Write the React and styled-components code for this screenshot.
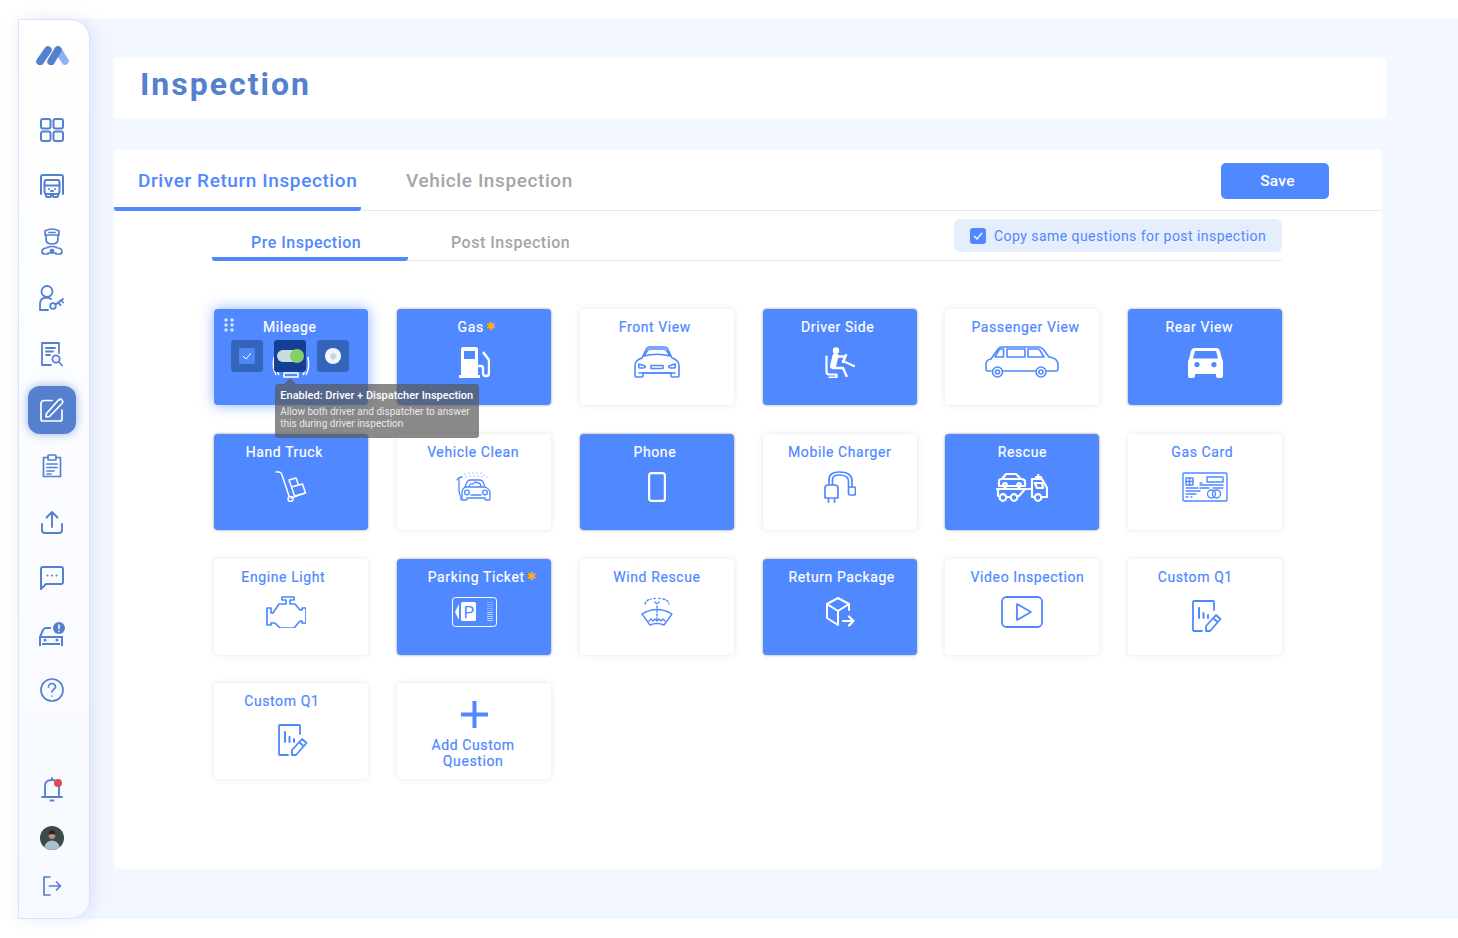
import React from "react";
import styled, { createGlobalStyle } from "styled-components";

const PRIMARY = "#4f88ff";
const NAVY = "#5580d0";

const GlobalStyle = createGlobalStyle`
  html, body {
    margin: 0;
    background: #fff;
    font-family: Roboto, "Liberation Sans", sans-serif;
  }
  * { box-sizing: border-box; }
`;

const Page = styled.div`
  padding: 19px 0 19px 18px;
  width: 1458px;
  height: 938px;
`;

const Frame = styled.div`
  display: flex;
  height: 900px;
  background: #f3f7ff;
`;

const Sidebar = styled.aside`
  flex: 0 0 72px;
  display: flex;
  flex-direction: column;
  align-items: center;
  padding: 26px 4px 8px 0;
  background: linear-gradient(180deg, #fff 0%, #f6f9ff 100%);
  border: 1px solid #d9e3f7;
  border-radius: 0 20px 20px 0;
  box-shadow: 6px 0 18px rgba(100, 130, 220, 0.12), -4px 0 14px rgba(100, 130, 220, 0.05);
`;

const Logo = styled.svg`
  display: block;
  margin: 0 0 41px 1px;
`;

const Nav = styled.nav`
  display: flex;
  flex-direction: column;
  gap: 8px;
`;

const NavItem = styled.a`
  width: 48px;
  height: 48px;
  display: flex;
  align-items: center;
  justify-content: center;
  border-radius: 12px;
  color: ${(p) => (p.$active ? "#fff" : NAVY)};
  background: ${(p) => (p.$active ? NAVY : "transparent")};
  box-shadow: ${(p) => (p.$active ? "0 0 10px rgba(85, 128, 208, 0.6)" : "none")};
`;

const BottomNav = styled.div`
  margin-top: auto;
  display: flex;
  flex-direction: column;
`;

const Main = styled.main`
  flex: 1;
  padding: 39px 0 0 24px;
`;

const HeaderCard = styled.header`
  width: 1272px;
  height: 60px;
  display: flex;
  align-items: center;
  padding: 0 0 8px 26px;
  margin-bottom: 32px;
  background: #fff;
  border-radius: 4px;
`;

const Title = styled.h1`
  margin: 0;
  font-size: 32px;
  font-weight: 700;
  letter-spacing: 2px;
  color: ${NAVY};
`;

const ContentCard = styled.section`
  width: 1268px;
  height: 719px;
  background: #fff;
  border-radius: 4px;
`;

const TopTabs = styled.div`
  display: flex;
  align-items: stretch;
  height: 61px;
  border-bottom: 1px solid #e8e8e8;
`;

const TopTab = styled.div`
  width: ${(p) => p.$width}px;
  height: 61px;
  padding: 19px 0 0 ${(p) => p.$pad}px;
  font-size: 19px;
  font-weight: 500;
  letter-spacing: 0.6px;
  line-height: 24px;
  color: ${(p) => (p.$active ? PRIMARY : "#a5a5a5")};
  border-bottom: 4px solid ${(p) => (p.$active ? PRIMARY : "transparent")};
  border-radius: 0 0 3px 3px;
`;

const SaveButton = styled.button`
  width: 108px;
  height: 36px;
  margin: 13px 53px 0 auto;
  padding: 0 0 0 5px;
  border: 0;
  border-radius: 5px;
  background: ${PRIMARY};
  color: #fff;
  font: 500 15.5px Roboto, sans-serif;
  letter-spacing: 0.3px;
`;

const SubTabs = styled.div`
  display: flex;
  height: 50px;
  margin: 0 100px 0 98px;
  border-bottom: 1px solid #eaeaea;
`;

const SubTab = styled.div`
  width: ${(p) => p.$width}px;
  height: 50px;
  padding: 22px 0 0 ${(p) => p.$pad}px;
  font-size: 16px;
  font-weight: 500;
  letter-spacing: 0.5px;
  line-height: 19px;
  color: ${(p) => (p.$active ? PRIMARY : "#a5a5a5")};
  border-bottom: ${(p) => (p.$active ? `4px solid ${PRIMARY}` : "0")};
  border-radius: 0 0 3px 3px;
`;

const CopyBox = styled.label`
  display: flex;
  align-items: center;
  gap: 8px;
  width: 328px;
  height: 33px;
  margin: 8px 0 0 auto;
  padding-left: 16px;
  border-radius: 6px;
  background: #e6edfd;
  color: ${PRIMARY};
  font-size: 14px;
  letter-spacing: 0.45px;
`;

const CopyCheck = styled.span`
  width: 16px;
  height: 16px;
  display: flex;
  align-items: center;
  justify-content: center;
  border-radius: 3px;
  background: ${PRIMARY};
`;

const Grid = styled.div`
  display: grid;
  grid-template-columns: repeat(6, 154px);
  grid-auto-rows: 96px;
  gap: 28.8px;
  margin: 48px 0 0 100.3px;
  width: 1069px;
`;

const Card = styled.div`
  position: relative;
  padding-top: 10px;
  border-radius: 4px;
  background: ${(p) => (p.$on ? PRIMARY : "#fff")};
  color: ${(p) => (p.$on ? "#fff" : PRIMARY)};
  box-shadow: ${(p) =>
    p.$glow
      ? "0 0 14px rgba(79, 136, 255, 0.65)"
      : p.$on
      ? "0 0 3px rgba(0, 0, 0, 0.4)"
      : "0 0 6px rgba(0, 0, 0, 0.1)"};
`;

const Label = styled.div`
  display: flex;
  justify-content: center;
  height: 16px;
  padding-left: ${(p) => Math.max(0, p.$shift * 2)}px;
  padding-right: ${(p) => Math.max(0, -p.$shift * 2)}px;
  font-size: 14px;
  font-weight: 400;
  letter-spacing: 0.6px;
  line-height: 16px;
  white-space: nowrap;
  -webkit-text-stroke: 0.2px currentColor;
`;

const Star = styled.span`
  margin-left: 2px;
  color: #ffb000;
  font-family: "DejaVu Sans", sans-serif;
  font-size: 11px;
`;

const IconBox = styled.div`
  display: flex;
  justify-content: center;
  align-items: center;
  height: 36px;
  margin-top: 9px;
  padding-top: ${(p) => p.$drop || 0}px;
  padding-right: ${(p) => Math.max(0, p.$left || 0)}px;
  padding-left: ${(p) => Math.max(0, -(p.$left || 0))}px;
`;

const AddBody = styled.div`
  display: flex;
  flex-direction: column;
  align-items: center;
  padding-top: 8px;
  font-size: 14px;
  font-weight: 400;
  letter-spacing: 0.6px;
  line-height: 16px;
  text-align: center;
  -webkit-text-stroke: 0.2px currentColor;
`;

const AddText = styled.div`
  margin-top: 9px;
  padding-right: 2px;
`;

const DragDots = styled.svg`
  position: absolute;
  left: 10px;
  top: 9px;
`;

const Actions = styled.div`
  position: absolute;
  left: 17px;
  top: 31px;
  display: flex;
  gap: 11px;
`;

const ActionButton = styled.span`
  width: 32px;
  height: 32px;
  display: flex;
  align-items: center;
  justify-content: center;
  border-radius: 3px;
  background: ${(p) => (p.$dark ? "#153e95" : "#3565bb")};
`;

const MiniCheck = styled.span`
  width: 16px;
  height: 16px;
  display: flex;
  align-items: center;
  justify-content: center;
  border-radius: 2px;
  background: #4d86f5;
`;

const Toggle = styled.span`
  position: relative;
  display: block;
  width: 26px;
  height: 12px;
  border-radius: 6px;
  background: #c9dcdc;
`;

const ToggleKnob = styled.span`
  position: absolute;
  right: -1px;
  top: -1px;
  width: 14px;
  height: 14px;
  border-radius: 50%;
  background: #84d16c;
`;

const Dot = styled.span`
  width: 16px;
  height: 16px;
  display: flex;
  align-items: center;
  justify-content: center;
  border-radius: 50%;
  background: #f4f6fb;
  color: #c8cfdc;
  font-family: "DejaVu Sans", sans-serif;
  font-size: 10px;
`;

const Tooltip = styled.div`
  position: absolute;
  z-index: 2;
  left: 61px;
  top: 75px;
  width: 204px;
  height: 54px;
  padding: 5px 5px 0;
  border-radius: 3px;
  background: rgba(88, 88, 88, 0.7);
  color: #fff;
  &::before {
    content: "";
    position: absolute;
    left: 9px;
    top: -6px;
    border: 6px solid transparent;
    border-top: 0;
    border-bottom-color: rgba(88, 88, 88, 0.7);
  }
`;

const TipTitle = styled.div`
  font-size: 11px;
  font-weight: 500;
  line-height: 13px;
  white-space: nowrap;
  margin-bottom: 4px;
`;

const TipBody = styled.div`
  font-size: 10px;
  line-height: 12px;
  color: #e8e8e8;
  white-space: nowrap;
`;

/* sidebar icons */
const Line = ({ w = 24, h = 24, sw = 2, children }) => (
  <svg width={w} height={h} viewBox={`0 0 ${w} ${h}`} fill="none" stroke="currentColor" strokeWidth={sw} strokeLinecap="round" strokeLinejoin="round">
    {children}
  </svg>
);

const DashIcon = () => (
  <Line>
    <rect x="1" y="1" width="9.5" height="9.5" rx="2" />
    <rect x="13.5" y="1" width="9.5" height="9.5" rx="2" />
    <rect x="1" y="13.5" width="9.5" height="9.5" rx="2" />
    <rect x="13.5" y="13.5" width="9.5" height="9.5" rx="2" />
  </Line>
);

const TruckIcon = () => (
  <Line>
    <path d="M1 20V3a2 2 0 012-2h18a2 2 0 012 2v17" />
    <rect x="4.5" y="6" width="15" height="14" rx="2" />
    <path d="M4.500 11.500h15M6 20v2a1 1 0 001 1h3a1 1 0 001-1v-2M13 20v2a1 1 0 001 1h3a1 1 0 001-1v-2M9 15h.01M15 15h.01M11 17h2" />
  </Line>
);

const DriverIcon = () => (
  <Line w={22} h={29} sw={1.700}>
    <path d="M4 3q7-4 14 0v4H4zM5 7v4q0 5 6 5t6-5V7M8 4.500h6" />
    <path d="M6 19.500q5-2 10 0M5.500 20Q1 20 1 24q0 2 3 2h3l1-1M16.500 20q4.500 0 4.500 4 0 2-3 2h-3l-1-1M7 25h8" />
    <circle cx="11" cy="23" r="1.500" fill="currentColor" />
  </Line>
);

const PersonKeyIcon = () => (
  <Line w={26} h={26} sw={1.800}>
    <circle cx="8" cy="6.500" r="5.500" />
    <path d="M1 25v-6q0-6 6-6.500 3 0 5 1.500M1 25h8" />
    <circle cx="14" cy="21" r="2.800" />
    <path d="M16.500 19.500L24 14M19 17.500l2.500 2.500M22 15l2 2.500" />
  </Line>
);

const ReportIcon = () => (
  <Line w={22} h={25} sw={1.800}>
    <path d="M18 11V1H1v22h9" />
    <path d="M5 6h9M5 9.500h7M5 13h4" />
    <circle cx="15" cy="17" r="3.600" />
    <path d="M18 20l3 3.500" />
  </Line>
);

const EditIcon = () => (
  <Line w={24} h={24} sw={1.700}>
    <path d="M12 2.500H4a3 3 0 00-3 3V21a2 2 0 002 2h17a2 2 0 002-2V12" />
    <path d="M6.500 15.500L18.500 2q2-1.500 3.500 0t0 3.500L9.500 18.500l-3.500.5z" />
  </Line>
);

const ClipboardIcon = () => (
  <Line w={20} h={24} sw={1.700}>
    <path d="M6 3.500H1.500v19h17v-19H14" />
    <rect x="6" y="1" width="8" height="5" rx="1" />
    <path d="M5 10h10M5 13.500h10M5 17h7M5 20h4" />
  </Line>
);

const UploadIcon = () => (
  <Line w={22} h={24} sw={1.900}>
    <path d="M1 14v6a3 3 0 003 3h14a3 3 0 003-3v-6M11 17V2M5.500 7.500L11 2l5.500 5.500" />
  </Line>
);

const ChatIcon = () => (
  <Line w={24} h={24} sw={2}>
    <path d="M1 23V3a2 2 0 012-2h18a2 2 0 012 2v13a2 2 0 01-2 2H6z" />
    <path d="M7.500 9.500h.01M12 9.500h.01M16.500 9.500h.01" />
  </Line>
);

const CarAlertIcon = () => (
  <svg width="26" height="25" viewBox="0 0 26 25" fill="none" stroke="currentColor" strokeWidth="2">
    <path d="M1 24v-9l3-7q1-2 3-2h5M1 15h22v9M3 22h18" />
    <circle cx="6" cy="18" r="1.500" fill="currentColor" stroke="none" />
    <circle cx="18" cy="18" r="1.500" fill="currentColor" stroke="none" />
    <circle cx="20" cy="6" r="6" fill="currentColor" stroke="none" />
    <path d="M20 2.500v4.500M20 8.500v1.200" stroke="#fff" strokeWidth="1.600" />
  </svg>
);

const HelpIcon = () => (
  <Line w={24} h={24} sw={1.700}>
    <circle cx="12" cy="12" r="11" />
    <path d="M8.500 9a3.500 3.500 0 117 0c0 2-3.500 2.500-3.500 5M12 18h.01" />
  </Line>
);

const BellIcon = () => (
  <svg width="22" height="26" viewBox="0 0 22 26" fill="none" stroke="currentColor" strokeWidth="1.900" strokeLinecap="round">
    <path d="M1 20h20M4 20V9q0-6 7-6t7 6v11M11 3V1M9.500 23.500h3" />
    <circle cx="17" cy="6" r="4" fill="#d94e55" stroke="none" />
  </svg>
);

const Avatar = () => (
  <svg width="24" height="24" viewBox="0 0 24 24">
    <clipPath id="avatarClip"><circle cx="12" cy="12" r="12" /></clipPath>
    <g clipPath="url(#avatarClip)">
      <rect width="24" height="24" fill="#3c4a48" />
      <path d="M4 24q0-9 8-9.500 8 .5 8 9.500z" fill="#a8c0d4" />
      <circle cx="12" cy="9.500" r="3.400" fill="#b98f78" />
      <path d="M8.600 9q0-4.400 3.400-4.400T15.400 9q-3.400-2.200-6.800 0z" fill="#26201d" />
    </g>
  </svg>
);

const LogoutIcon = () => (
  <Line w={20} h={20} sw={1.700}>
    <path d="M8 1H2v18h6M7.500 10h11M14.500 6l4 4-4 4" />
  </Line>
);

/* card icons */
const CarFront = () => (
  <Line w={46} h={32} sw={1.600}>
    <path d="M8 12l4-8.500Q13 1 16 1h14q3 0 4 2.500l4 8.500q7 2 7 8v10a1 1 0 01-1 1h-6a1 1 0 01-1-1v-3H9v3a1 1 0 01-1 1H2a1 1 0 01-1-1V20q0-6 7-8z" />
    <path d="M10 10l3.500-5.500Q14.500 3 16 3h14q1.500 0 2.500 1.500L36 10q-13-3.500-26 0z" />
    <path d="M5 18l6 2q1 2-2 2H6q-2 0-1-4zM41 18l-6 2q-1 2 2 2h3q2 0 1-4z" />
    <rect x="17" y="19.500" width="12" height="3" />
    <path d="M5 27h36" />
  </Line>
);

const VanIcon = () => (
  <Line w={74} h={32} sw={1.600}>
    <path d="M6 25H3q-2 0-2-2v-5q0-4 5-5l7-10q1-2 4-2h36q3 0 5 2l6 8q9 1 9 8v4q0 2-2 2h-9M18 25h32" />
    <path d="M10 11l4-7q.5-1 2-1h2.500v8zM22 3h18v8H22zM43 3h10q1 0 2 1.500l4 6.500H43z" />
    <circle cx="12.500" cy="26" r="5" />
    <circle cx="12.500" cy="26" r="2" />
    <circle cx="56" cy="26" r="5" />
    <circle cx="56" cy="26" r="2" />
  </Line>
);

const RearCar = () => (
  <svg width="35" height="31" viewBox="0 0 35 31" fill="#fff" fillRule="evenodd">
    <path d="M6 1h23q2 0 3 3l2 8q1 1 1 3v14q0 2-2 2h-3q-2 0-2-2v-2H7v2q0 2-2 2H2q-2 0-2-2V15q0-2 1-3l2-8q1-3 3-3zM7 4l-2 7.500h25L28 4zM9 15a2.600 2.600 0 100 5.200A2.600 2.600 0 009 15zM26 15a2.600 2.600 0 100 5.200 2.600 2.600 0 000-5.200z" />
  </svg>
);

const DriverSeat = () => (
  <svg width="30" height="31" viewBox="0 0 30 31" fill="none" stroke="#fff" strokeLinecap="round" strokeLinejoin="round">
    <circle cx="11" cy="3.500" r="3.200" fill="#fff" stroke="none" />
    <path d="M10.500 9L8 19" strokeWidth="6" />
    <path d="M11 9.500h9M8 21h10l3.500 8M21 8l-3 7M18 14l11 5" strokeWidth="2.400" />
    <path d="M1.500 9.500v15q0 3 3 3h7v3h-7" strokeWidth="2.200" />
  </svg>
);

const GasPump = () => (
  <svg width="31" height="31" viewBox="0 0 31 31" fill="none">
    <path fillRule="evenodd" fill="#fff" d="M2 2q0-2 2-2h13q2 0 2 2v26h2v3H0v-3h2zM5 4v8h11V4z" />
    <path d="M19 19h3q2 0 2 2v5q0 3 3 3t3-3V13l-6-8" stroke="#fff" strokeWidth="2.400" />
  </svg>
);

const Gauge = () => (
  <svg width="40" height="36" viewBox="0 0 40 36" fill="none" stroke="#fff" strokeWidth="1.500">
    <path d="M5 31Q1 24 3 13M8 31q-3-5-2-10M35 31q4-7 2-18M32 31q3-5 2-10" />
    <rect x="13" y="29" width="14" height="4" />
  </svg>
);

const HandTruck = () => (
  <Line w={32} h={31} sw={1.500}>
    <path d="M1 1h3q2 0 3 3l7 21M16 27l14-5" />
    <circle cx="15.500" cy="28" r="2.500" />
    <path d="M14 9l7-2 2.500 7-7 2zM16.500 16l11-3 3 9-11 3z" />
  </Line>
);

const CarWash = () => (
  <Line w={36} h={30} sw={1.300}>
    <path d="M9 15l2-5q1-2 3-2h10q2 0 3 2l2 5q5 2 5 6v6a1 1 0 01-1 1h-3a1 1 0 01-1-1v-1H11v1a1 1 0 01-1 1H7a1 1 0 01-1-1v-6q0-4 3-6z" />
    <path d="M13 15q1-4 4-3 2-3 5-1 3 0 3 4M9 15h20" />
    <circle cx="11" cy="20.500" r="2.400" />
    <circle cx="29" cy="20.500" r="2.400" />
    <path d="M15 23h10M1 8q2-3 5-3M3 8v10q0 4 2 7v3" />
    <path d="M9 2h.01M13 1h.01M17 1h.01M21 1h.01M25 1h.01M28 3h.01M31 5h.01M10 5h.01M14 4h.01M18 4h.01M22 4h.01M26 5h.01" strokeWidth="1.200" />
  </Line>
);

const PhoneIcon = () => (
  <Line w={18} h={30} sw={2.200}>
    <rect x="1.100" y="1.100" width="15.800" height="27.800" rx="2.500" />
  </Line>
);

const Charger = () => (
  <Line w={32} h={32} sw={1.700}>
    <path d="M5 14V9Q5 1 15 1q13 0 13 9v6M8.500 14V9q0-5 6.500-5 9.500 0 9.500 6v6" />
    <path d="M1 17q0-3 3-3h7q3 0 3 3v10H1zM4.500 27v4.500M10.500 27v4.500" />
    <rect x="24.500" y="16" width="7" height="8" rx="1.500" />
  </Line>
);

const RescueTruck = () => (
  <Line w={52} h={30} sw={2.200}>
    <path d="M3 14V9q0-2 3-2l4-5h10l5 5q4 0 4 3v4zM8 7h17" />
    <circle cx="9" cy="13" r="1.800" />
    <circle cx="23" cy="13" r="1.800" />
    <path d="M1 17h34M2 17v7M36 7h10l5 9v9h-5M36 7v18h2M29 17l-6 7H22M11 25h3M42 3h.5M40 7V5h5v2M39 11h7l1 5h-6z" />
    <circle cx="7" cy="25.500" r="3.300" />
    <circle cx="18" cy="25.500" r="3.300" />
    <circle cx="42" cy="25.500" r="3.300" />
  </Line>
);

const GasCard = () => (
  <Line w={46} h={30} sw={1.400}>
    <rect x="1" y="1" width="44" height="28" rx="1" />
    <rect x="4" y="6" width="7" height="7" />
    <path d="M7.500 6v7M4 9.500h7M20 11h-2M4 16h12M4 19h14M4 22h10M4 25h2M9 25h1" />
    <rect x="25" y="5" width="16" height="5" />
    <path d="M18 13h23M18 16h9M31 16h10" />
    <circle cx="29.500" cy="22" r="4" />
    <circle cx="34.500" cy="22" r="4" />
  </Line>
);

const EngineIcon = () => (
  <Line w={40} h={32} sw={1.700}>
    <path d="M16 1h12v3h-4v4h5l5 6h2v-2h4v15h-4v-2h-2l-6 7H14l-5-5H5v2H1V12h4v5h2l6-9h7V4h-4z" />
  </Line>
);

const ParkingIcon = () => (
  <svg width="45" height="30" viewBox="0 0 45 30" fill="none">
    <rect x=".5" y=".5" width="44" height="29" rx="3" stroke="#fff" />
    <path d="M7 7l-4 8 4 8z" fill="#fff" />
    <rect x="9" y="5" width="15" height="19" rx="1.500" fill="#fff" />
    <text x="11.500" y="21" fontFamily="Roboto, sans-serif" fontSize="17" fill={PRIMARY}>P</text>
    <path d="M35 5.500h6M35 7.500h6M35 9.500h6M35 11.500h6M35 13.500h6" stroke="#fff" strokeOpacity=".45" strokeWidth=".7" />
    <path d="M35 15.500h6M35 17.500h6M35 19.500h6M35 21.500h6M35 23.500h6" stroke="#fff" strokeOpacity=".9" strokeWidth=".7" />
  </svg>
);

const WiperIcon = () => (
  <Line w={32} h={30} sw={1.400}>
    <path d="M1 17q15-9 30 0l-8 11q-7-3-14 0z" />
    <path d="M8 24l2-2 2 2 2-2 2 2 2-2 2 2 2-2 2 2" />
    <path d="M16 9v15" strokeDasharray="2 2" />
    <path d="M4 7q1-4 6-5M13 1.500h1M18 1.500h1M22 2q5 1 6 5M14 5l2 2 2-2" strokeDasharray="2 2" />
  </Line>
);

const PackageIcon = () => (
  <Line w={30} h={30} sw={2}>
    <path d="M13 1L24 7v6M13 1L2 7v14l11 7M13 28V14M2 7l11 7 11-7" />
    <path d="M18 24h10M24 19.500l4.500 4.500-4.500 4.500" strokeWidth="2.200" />
  </Line>
);

const VideoIcon = () => (
  <Line w={42} h={32} sw={1.800}>
    <rect x="1" y="1" width="40" height="30" rx="4.500" />
    <path d="M16 8v16l14-8z" />
  </Line>
);

const CustomIcon = () => (
  <Line w={30} h={32} sw={1.800}>
    <path d="M22 10V2q0-1-1-1H2Q1 1 1 2v28q0 1 1 1h8" />
    <path d="M7 8v10M11.500 13v5M16 15v3" strokeWidth="2" />
    <path d="M14 31v-5l10-11 4.500 4L18 31zM21 18l4.500 4" />
  </Line>
);

const PlusIcon = () => (
  <svg width="27" height="27" viewBox="0 0 27 27" stroke={PRIMARY} strokeWidth="4">
    <path d="M13.500 0v27M0 13.500h27" />
  </svg>
);

const SIDE_ITEMS = [
  { icon: DashIcon },
  { icon: TruckIcon },
  { icon: DriverIcon },
  { icon: PersonKeyIcon },
  { icon: ReportIcon },
  { icon: EditIcon, active: true },
  { icon: ClipboardIcon },
  { icon: UploadIcon },
  { icon: ChatIcon },
  { icon: CarAlertIcon },
  { icon: HelpIcon },
];

const CARDS = [
  { label: "Mileage", shift: -1.5, on: true, icon: Gauge, mileage: true },
  { label: "Gas", shift: 2.5, on: true, icon: GasPump, star: true },
  { label: "Front View", shift: -2, icon: CarFront },
  { label: "Driver Side", shift: -2, on: true, icon: DriverSeat },
  { label: "Passenger View", shift: 3, icon: VanIcon },
  { label: "Rear View", shift: -6, on: true, icon: RearCar },
  { label: "Hand Truck", shift: -7, on: true, icon: HandTruck },
  { label: "Vehicle Clean", shift: -1, icon: CarWash },
  { label: "Phone", shift: -2, on: true, icon: PhoneIcon },
  { label: "Mobile Charger", shift: 0, icon: Charger },
  { label: "Rescue", shift: 0, on: true, icon: RescueTruck },
  { label: "Gas Card", shift: -3, icon: GasCard },
  { label: "Engine Light", shift: -8, icon: EngineIcon, left: 10 },
  { label: "Parking Ticket", shift: 8, on: true, icon: ParkingIcon, star: true },
  { label: "Wind Rescue", shift: 0, icon: WiperIcon },
  { label: "Return Package", shift: 2, on: true, icon: PackageIcon },
  { label: "Video Inspection", shift: 5, icon: VideoIcon },
  { label: "Custom Q1", shift: -10, icon: CustomIcon, drop: 8, left: -3 },
  { label: "Custom Q1", shift: -9.5, icon: CustomIcon, drop: 8, left: -3 },
];

function QuestionCard({ card }) {
  const Icon = card.icon;
  return (
    <Card $on={card.on} $glow={card.mileage}>
      <Label $shift={card.shift}>
        {card.label}
        {card.star && <Star>✱</Star>}
      </Label>
      <IconBox $drop={card.drop} $left={card.left}>
        <Icon />
      </IconBox>
      {card.mileage && (
        <>
          <DragDots width="10" height="14" viewBox="0 0 10 14" fill="#fff" fillOpacity=".8">
            <circle cx="2" cy="2" r="1.700" />
            <circle cx="8" cy="2" r="1.700" />
            <circle cx="2" cy="7" r="1.700" />
            <circle cx="8" cy="7" r="1.700" />
            <circle cx="2" cy="12" r="1.700" />
            <circle cx="8" cy="12" r="1.700" />
          </DragDots>
          <Actions>
            <ActionButton>
              <MiniCheck>
                <svg width="10" height="8" viewBox="0 0 10 8" fill="none" stroke="#fff" strokeWidth="1">
                  <path d="M1 4l3 3 5-6" />
                </svg>
              </MiniCheck>
            </ActionButton>
            <ActionButton $dark>
              <Toggle>
                <ToggleKnob />
              </Toggle>
            </ActionButton>
            <ActionButton>
              <Dot>✱</Dot>
            </ActionButton>
          </Actions>
          <Tooltip>
            <TipTitle>Enabled: Driver + Dispatcher Inspection</TipTitle>
            <TipBody>Allow both driver and dispatcher to answer</TipBody>
            <TipBody>this during driver inspection</TipBody>
          </Tooltip>
        </>
      )}
    </Card>
  );
}

export default function App() {
  return (
    <Page>
      <GlobalStyle />
      <Frame>
        <Sidebar>
          <Logo width="33" height="19" viewBox="0 0 33 19" fill="none" strokeWidth="7.500" strokeLinecap="round">
            <path d="M22 4L29 15" stroke="#8fb0f5" />
            <path d="M4 15.500L12 4" stroke={NAVY} />
            <path d="M15 15.500L22 4" stroke={NAVY} />
          </Logo>
          <Nav>
            {SIDE_ITEMS.map(({ icon: Icon, active }, i) => (
              <NavItem key={i} $active={active}>
                <Icon />
              </NavItem>
            ))}
          </Nav>
          <BottomNav>
            <NavItem><BellIcon /></NavItem>
            <NavItem><Avatar /></NavItem>
            <NavItem><LogoutIcon /></NavItem>
          </BottomNav>
        </Sidebar>
        <Main>
          <HeaderCard>
            <Title>Inspection</Title>
          </HeaderCard>
          <ContentCard>
            <TopTabs>
              <TopTab $active $width={247} $pad={24}>Driver Return Inspection</TopTab>
              <TopTab $width={300} $pad={45}>Vehicle Inspection</TopTab>
              <SaveButton>Save</SaveButton>
            </TopTabs>
            <SubTabs>
              <SubTab $active $width={196} $pad={39}>Pre Inspection</SubTab>
              <SubTab $width={200} $pad={43}>Post Inspection</SubTab>
              <CopyBox>
                <CopyCheck>
                  <svg width="10" height="8" viewBox="0 0 10 8" fill="none" stroke="#fff" strokeWidth="1.200">
                    <path d="M1 4l3 3 5-6" />
                  </svg>
                </CopyCheck>
                Copy same questions for post inspection
              </CopyBox>
            </SubTabs>
            <Grid>
              {CARDS.map((card, i) => (
                <QuestionCard key={i} card={card} />
              ))}
              <Card>
                <AddBody>
                  <PlusIcon />
                  <AddText>Add Custom<br />Question</AddText>
                </AddBody>
              </Card>
            </Grid>
          </ContentCard>
        </Main>
      </Frame>
    </Page>
  );
}
